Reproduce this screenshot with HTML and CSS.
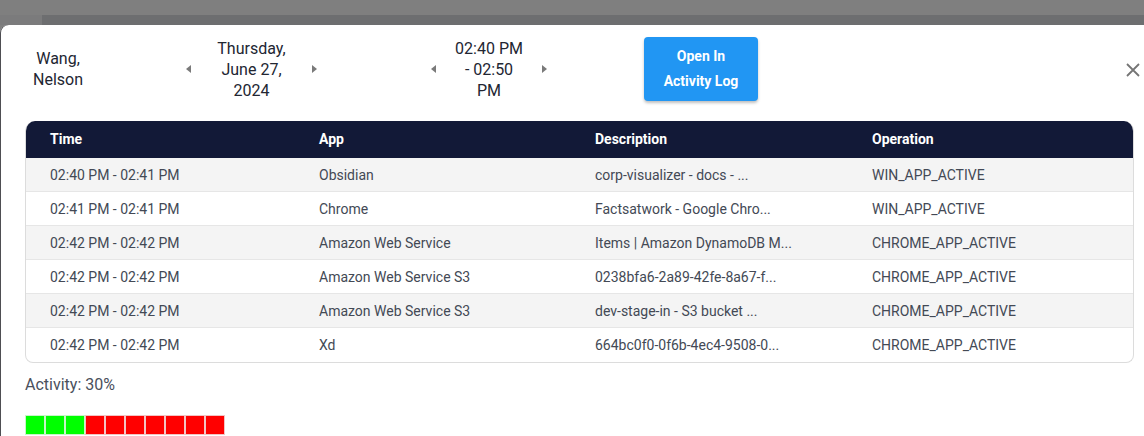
FILE: index.html
```html
<!DOCTYPE html>
<html>
<head>
<meta charset="utf-8">
<link rel="stylesheet" href="styles.css">
</head>
<body>
<div class="backdrop">
  <div class="band-top"></div>
  <div class="band-row"><div class="band-left"></div><div class="band-right"></div></div>
  <div class="main-row">
    <div class="modal">
      <div class="head">
        <div class="name">Wang,<br>Nelson</div>
        <div class="nav nav-date">
          <span class="arrow left"></span>
          <div class="nav-text date-text">Thursday,<br>June 27,<br>2024</div>
          <span class="arrow right"></span>
        </div>
        <div class="nav nav-time">
          <span class="arrow left"></span>
          <div class="nav-text time-text">02:40 PM<br>- 02:50<br>PM</div>
          <span class="arrow right"></span>
        </div>
        <button class="open-btn">Open In<br>Activity Log</button>
      </div>
      <button class="close" aria-label="close">
        <svg width="14" height="14" viewBox="0 0 14 14"><path d="M1 1L13 13M13 1L1 13" stroke="#757575" stroke-width="1.8" fill="none"/></svg>
      </button>

      <div class="table">
        <div class="row header">
          <div class="cell">Time</div><div class="cell">App</div><div class="cell">Description</div><div class="cell">Operation</div>
        </div>
        <div class="row odd">
          <div class="cell">02:40 PM - 02:41 PM</div><div class="cell">Obsidian</div><div class="cell">corp-visualizer - docs - ...</div><div class="cell">WIN_APP_ACTIVE</div>
        </div>
        <div class="row">
          <div class="cell">02:41 PM - 02:41 PM</div><div class="cell">Chrome</div><div class="cell">Factsatwork - Google Chro...</div><div class="cell">WIN_APP_ACTIVE</div>
        </div>
        <div class="row odd">
          <div class="cell">02:42 PM - 02:42 PM</div><div class="cell">Amazon Web Service</div><div class="cell">Items | Amazon DynamoDB M...</div><div class="cell">CHROME_APP_ACTIVE</div>
        </div>
        <div class="row">
          <div class="cell">02:42 PM - 02:42 PM</div><div class="cell">Amazon Web Service S3</div><div class="cell">0238bfa6-2a89-42fe-8a67-f...</div><div class="cell">CHROME_APP_ACTIVE</div>
        </div>
        <div class="row odd">
          <div class="cell">02:42 PM - 02:42 PM</div><div class="cell">Amazon Web Service S3</div><div class="cell">dev-stage-in - S3 bucket ...</div><div class="cell">CHROME_APP_ACTIVE</div>
        </div>
        <div class="row last">
          <div class="cell">02:42 PM - 02:42 PM</div><div class="cell">Xd</div><div class="cell">664bc0f0-0f6b-4ec4-9508-0...</div><div class="cell">CHROME_APP_ACTIVE</div>
        </div>
      </div>

      <div class="activity">Activity: 30%</div>
      <div class="bar">
        <span class="sq on"></span><span class="sq on"></span><span class="sq on"></span>
        <span class="sq off"></span><span class="sq off"></span><span class="sq off"></span><span class="sq off"></span><span class="sq off"></span><span class="sq off"></span><span class="sq off"></span>
      </div>
    </div>
  </div>
</div>
</body>
</html>
```

FILE: styles.css
```css
* { box-sizing: border-box; }
html, body { margin: 0; padding: 0; }
body {
  width: 1144px;
  height: 436px;
  overflow: hidden;
  background: #7f7f7f;
  font-family: Roboto, "Liberation Sans", Arial, sans-serif;
}
.backdrop { display: flex; flex-direction: column; height: 436px; }
.band-top { height: 15px; background: #7f7f7f; }
.band-row { height: 10px; display: flex; }
.band-left { width: 42px; background: #7b7b7c; }
.band-right { flex: 1; background: #6d6e70; }
.main-row { flex: 1; display: flex; }
.modal {
  position: relative;
  width: 1159px;
  flex: none;
  background: #fff;
  border-top-left-radius: 8px;
  box-shadow: inset 1px 0 0 #4e4e52;
  padding: 12px 25px 0 25px;
}
.head {
  display: flex;
  align-items: center;
  height: 64px;
  color: #222632;
  font-size: 16px;
  line-height: 21px;
}
.name { width: 66px; text-align: center; }
.nav { display: flex; align-items: center; gap: 10px; }
.nav-date { margin-left: 95px; }
.nav-time { margin-left: 114px; }
.nav-text { text-align: center; }
.date-text { width: 101px; }
.time-text { width: 86px; }
.arrow {
  width: 0; height: 0;
  border-top: 4px solid transparent;
  border-bottom: 4px solid transparent;
}
.arrow.left { border-right: 5px solid #7a7a7a; }
.arrow.right { border-left: 5px solid #7a7a7a; }
.open-btn {
  margin-left: 97px;
  width: 114px;
  height: 64px;
  border: none;
  border-radius: 4px;
  background: #2196f3;
  color: #fff;
  font-family: inherit;
  font-size: 14px;
  font-weight: 700;
  line-height: 25px;
  box-shadow: 0 2px 3px rgba(0,0,0,0.25);
  padding: 0;
}
.close {
  position: absolute;
  top: 37px;
  left: 1125px;
  width: 16px;
  height: 16px;
  padding: 0;
  border: none;
  background: transparent;
  display: flex;
  align-items: center;
  justify-content: center;
}
.table {
  margin-top: 20px;
  width: 1109px;
  border: 1px solid #dcdcdc;
  border-top: none;
  border-radius: 10px 10px 8px 8px;
  overflow: hidden;
  font-size: 14px;
}
.row {
  display: grid;
  grid-template-columns: 269px 276px 277px 1fr;
  height: 34px;
  align-items: center;
  color: #434955;
  border-bottom: 1px solid #e6e6e6;
}
.row.last { border-bottom: none; }
.row.odd { background: #f4f4f4; }
.row.header {
  height: 37px;
  background: #121937;
  color: #fff;
  font-weight: 700;
  border-bottom: none;
  padding-bottom: 1px;
}
.cell { padding-left: 24px; white-space: nowrap; }
.activity {
  margin-top: 11px;
  font-size: 16px;
  color: #4a505c;
  line-height: 21px;
}
.bar { display: flex; margin-top: 20px; }
.sq {
  width: 20px;
  height: 20px;
  border: 1px solid rgba(255,255,255,0.55);
}
.sq.on { background: #00ff00; border-color: #c8f5c8; }
.sq.off { background: #ff0000; border-color: #f3c3c3; }
```
